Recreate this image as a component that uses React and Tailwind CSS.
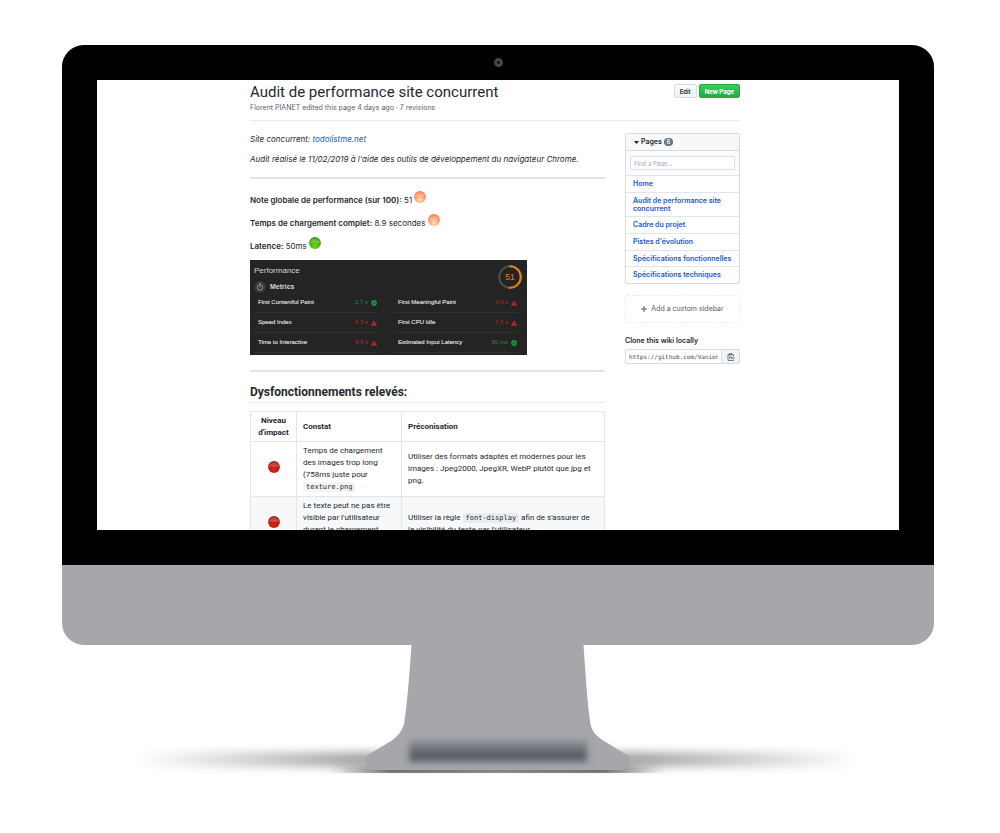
import React from "react";

const pages = [
  "Home",
  "Audit de performance site concurrent",
  "Cadre du projet",
  "Pistes d'évolution",
  "Spécifications fonctionnelles",
  "Spécifications techniques",
];

const metrics = [
  ["First Contentful Paint", "1.7 s", true],
  ["First Meaningful Paint", "4.0 s", false],
  ["Speed Index", "6.3 s", false],
  ["First CPU Idle", "7.6 s", false],
  ["Time to Interactive", "8.9 s", false],
  ["Estimated Input Latency", "50 ms", true],
];

const ballColors = {
  orange: ["#ffe3c9", "#fba06c", "#f07a42"],
  green: ["#6fd414", "#49b80c", "#2f8f08"],
  red: ["#dd2614", "#c41a0c", "#96100a"],
};

function Ball({ color }) {
  const [light, mid, dark] = ballColors[color];
  const id = "ball-" + color;
  return (
    <svg viewBox="0 0 24 24" className="inline-block size-3 align-baseline" aria-hidden="true">
      <defs>
        <radialGradient id={id} cx="0.5" cy="0.75" r="0.65">
          <stop offset="0" stopColor={light} />
          <stop offset="0.6" stopColor={mid} />
          <stop offset="1" stopColor={dark} />
        </radialGradient>
        <linearGradient id={id + "-shine"} x1="0" y1="0" x2="0" y2="1">
          <stop offset="0" stopColor="#fff" stopOpacity="0.15" />
          <stop offset="1" stopColor="#fff" stopOpacity="0.25" />
        </linearGradient>
      </defs>
      <circle cx="12" cy="12" r="11.8" fill={`url(#${id})`} />
      <path d="M2 11.500C2 5.500 6.500 1.500 12 1.500S22 5.500 22 11.500Z" fill={`url(#${id}-shine)`} />
    </svg>
  );
}

function Status({ ok }) {
  return ok ? (
    <svg viewBox="0 0 12 12" className="size-[6px]" aria-hidden="true">
      <circle cx="6" cy="6" r="5.8" fill="#1b8f3e" />
      <path d="M3.2 6.2 5.2 8.1 8.9 4.2" fill="none" stroke="#242424" strokeWidth="1.4" />
    </svg>
  ) : (
    <svg viewBox="0 0 12 12" className="size-[6px]" aria-hidden="true">
      <path d="M6 .8 12 11.2H0Z" fill="#d4262a" />
      <path d="M6 4.4V8M6 8.8V10" stroke="#242424" strokeWidth="1.2" />
    </svg>
  );
}

function PerformancePanel() {
  return (
    <section className="mb-[15px] h-[95px] w-[277px] overflow-hidden bg-[#242424] px-1 pt-[5px] font-['Liberation_Sans',sans-serif] text-[#d5d5d5]">
      <div className="flex justify-between">
        <div>
          <h3 className="text-[8px] leading-[12px]">Performance</h3>
          <div className="mt-1 flex items-center gap-1">
            <span className="flex size-3 items-center justify-center rounded-full bg-[#363636]">
              <svg viewBox="0 0 16 16" className="size-2" fill="none" stroke="#b5b5b5" strokeWidth="1.4" aria-hidden="true">
                <circle cx="8" cy="9" r="5.4" />
                <path d="M8 9V6M6 1.2h4M12 4.6l1.2-1.2" />
              </svg>
            </span>
            <h4 className="text-[7px] leading-[10px] font-bold">Metrics</h4>
          </div>
        </div>
        <svg viewBox="0 0 48 48" className="mr-px size-6" role="img" aria-label="Score 51">
          <circle cx="24" cy="24" r="21.500" fill="none" stroke="#505050" strokeWidth="4" />
          <path d="M24 2.500a21.500 21.500 0 1 1-1.4 42.950" fill="none" stroke="#ef7b0e" strokeWidth="4" strokeLinecap="round" />
          <text x="24" y="30" textAnchor="middle" fontSize="17" fill="#ef7b0e">51</text>
        </svg>
      </div>
      <dl className="grid grid-cols-2 gap-x-4 pr-[5px] text-[6px] leading-[7px]">
        {metrics.map(([name, value, ok]) => (
          <div key={name} className="flex h-5 items-center justify-between border-b border-[#303030] pr-px pl-1">
            <dt className="[-webkit-text-stroke:0.2px]">{name}</dt>
            <dd className={ok ? "flex items-center gap-[3px] text-[#1f8f42]" : "flex items-center gap-[3px] text-[#b82428]"}>
              {value}
              <Status ok={ok} />
            </dd>
          </div>
        ))}
      </dl>
    </section>
  );
}

function Code({ children }) {
  return (
    <code className="rounded-xs bg-[#1b1f23]/5 px-[3px] py-px font-['DejaVu_Sans_Mono',monospace] text-[7px] leading-none">
      {children}
    </code>
  );
}

function IssuesTable() {
  const cell = "border border-[#e3e6e9] px-[6px] py-[3px]";
  const head = "border border-[#e3e6e9] px-[6px] pt-[3px] pb-[2px] text-left font-bold";
  return (
    <table className="w-full table-fixed border-collapse font-['Roboto',sans-serif] text-[8px] leading-[12px]">
      <colgroup>
        <col className="w-[46px]" />
        <col className="w-[105px]" />
        <col />
      </colgroup>
      <thead>
        <tr>
          <th className="border border-[#e3e6e9] px-[3px] pt-[3px] pb-[2px] text-center font-bold">Niveau d'impact</th>
          <th className={head}>Constat</th>
          <th className={head}>Préconisation</th>
        </tr>
      </thead>
      <tbody>
        <tr>
          <td className={`${cell} text-center`}><Ball color="red" /></td>
          <td className={cell}>
            Temps de chargement des images trop long (758ms juste pour <Code>texture.png</Code>
          </td>
          <td className={cell}>
            Utiliser des formats adaptés et modernes pour les images : Jpeg2000, JpegXR, WebP plutôt que jpg et png.
          </td>
        </tr>
        <tr className="bg-[#f6f8fa]">
          <td className={`${cell} text-center`}><Ball color="red" /></td>
          <td className={cell}>
            Le texte peut ne pas être visible par l'utilisateur durant le chargement typographique
          </td>
          <td className="border border-[#e3e6e9] py-[3px] pr-3 pl-[6px]">
            Utiliser la règle <Code>font-display</Code> afin de s'assurer de la visibilité du texte par l'utilisateur.
          </td>
        </tr>
      </tbody>
    </table>
  );
}

function Article() {
  return (
    <article className="min-w-0 flex-1 text-[8px] leading-[12px]">
      <p className="mb-2 italic">
        Site concurrent: <a href="#todolistme" className="text-[#0366d6]">todolistme.net</a>
      </p>
      <p className="mb-3 italic">
        Audit réalisé le 11/02/2019 à l'aide des outils de développement du navigateur Chrome.
      </p>
      <hr className="mb-3 h-[2px] border-0 bg-[#e1e4e8]" />
      <p className="mb-2 h-[15px]">
        <strong className="font-semibold">Note globale de performance (sur 100):</strong> 51 <Ball color="orange" />
      </p>
      <p className="mb-2 h-[15px]">
        <strong className="font-semibold">Temps de chargement complet:</strong> 8.9 secondes <Ball color="orange" />
      </p>
      <p className="mb-2 h-[15px]">
        <strong className="font-semibold">Latence:</strong> 50ms <Ball color="green" />
      </p>
      <PerformancePanel />
      <hr className="mb-3 h-[2px] border-0 bg-[#e1e4e8]" />
      <h2 className="mb-2 border-b border-[#eaecef] pb-[2px] pt-px font-['Roboto',sans-serif] text-[12px] leading-[15px] font-bold">
        Dysfonctionnements relevés:
      </h2>
      <IssuesTable />
    </article>
  );
}

function Sidebar() {
  return (
    <aside className="w-[115px] shrink-0 text-[7px]">
      <nav aria-label="Pages" className="rounded-xs border border-[#d8dce0]">
        <div className="flex h-[17px] items-center gap-[2px] border-b border-[#d8dce0] bg-[#f6f8fa] px-2 font-semibold">
          <svg viewBox="0 0 10 6" className="h-[3px] w-[5px]" aria-hidden="true"><path d="M0 0h10L5 6Z" fill="#24292e" /></svg>
          <h3>Pages</h3>
          <span className="flex h-2 w-[9px] items-center justify-center rounded-full bg-[#6a737d] text-[6px] leading-none text-white">6</span>
        </div>
        <div className="bg-[#fafbfc] px-1 py-[5px]">
          <input
            type="text"
            aria-label="Find a Page"
            placeholder="Find a Page…"
            className="block h-[14px] w-full rounded-xs border border-[#dcdfe3] bg-white px-[3px] text-[6px] placeholder:text-[#a3a8ae]"
          />
        </div>
        <ul className="flex h-[108px] flex-col leading-[8px] font-semibold">
          {pages.map((page) => (
            <li key={page} className="flex flex-auto items-center border-t border-[#e1e4e8] px-[7px] py-[3px]">
              <a href="#page" className="text-[#1558cf]">{page}</a>
            </li>
          ))}
        </ul>
      </nav>
      <a href="#sidebar" className="mt-[11px] flex h-7 items-center justify-center gap-1 rounded-xs border border-dashed border-[#eceef0] text-[#586069]">
        <svg viewBox="0 0 12 12" className="size-[6px]" stroke="#444b52" strokeWidth="1.8" aria-hidden="true"><path d="M6 0v12M0 6h12" /></svg>
        Add a custom sidebar
      </a>
      <label htmlFor="clone" className="mt-3 block leading-[12px] font-semibold">Clone this wiki locally</label>
      <div className="mt-[2px] flex h-[15px]">
        <input
          id="clone"
          type="text"
          readOnly
          defaultValue="https://github.com/Vanion"
          className="min-w-0 flex-1 rounded-l-xs border border-[#d8dce0] px-[3px] font-['DejaVu_Sans_Mono',monospace] text-[6px] text-[#444b52]"
        />
        <button type="button" aria-label="Copy" className="flex w-[18px] items-center justify-center rounded-r-xs border border-l-0 border-[#d8dce0] bg-[#f1f3f5]">
          <svg viewBox="0 0 16 16" className="size-2" fill="none" stroke="#444b52" strokeWidth="1.4" aria-hidden="true">
            <path d="M13 7V3H2v12h11v-2M5 3V1.2h5V3M4 6h5M4 8.5h3M4 11.500h3M15.500 10H8.500M11 7.500 8.500 10 11 12.500" />
          </svg>
        </button>
      </div>
    </aside>
  );
}

function WikiPage() {
  return (
    <div className="mx-auto w-[496px] max-w-full pr-[6px] pt-[2px] text-[#24292e]">
      <header className="mb-3 border-b border-[#eaecef] pb-[7px]">
        <div className="flex items-start justify-between">
          <h1 className="font-['Roboto',sans-serif] text-[15px] leading-[20px]">Audit de performance site concurrent</h1>
          <div className="mt-[2px] flex gap-[2px] text-[6px]">
            <button type="button" className="h-[14px] rounded-xs border border-[#d8dbde] bg-linear-to-b from-[#fafbfc] to-[#eff3f6] px-[5px] font-semibold">Edit</button>
            <button type="button" className="h-[14px] rounded-xs border border-[#28a745] bg-linear-to-b from-[#34d058] to-[#28a745] px-[5px] font-bold text-white">New Page</button>
          </div>
        </div>
        <p className="text-[7px] leading-[11px] text-[#586069]">Florent PIANET edited this page 4 days ago · 7 revisions</p>
      </header>
      <div className="flex gap-5">
        <Article />
        <Sidebar />
      </div>
    </div>
  );
}

function Stand() {
  return (
    <svg viewBox="128 645 740 140" className="mx-auto block w-[740px] max-w-full" aria-hidden="true">
      <defs>
        <linearGradient id="floor">
          <stop offset="0" stopColor="#000" stopOpacity="0" />
          <stop offset="0.3" stopColor="#000" stopOpacity="0.34" />
          <stop offset="0.7" stopColor="#000" stopOpacity="0.34" />
          <stop offset="1" stopColor="#000" stopOpacity="0" />
        </linearGradient>
        <linearGradient id="contact">
          <stop offset="0" stopColor="#333" stopOpacity="0" />
          <stop offset="0.18" stopColor="#333" stopOpacity="0.85" />
          <stop offset="0.5" stopColor="#6a6a6d" />
          <stop offset="0.82" stopColor="#333" stopOpacity="0.85" />
          <stop offset="1" stopColor="#333" stopOpacity="0" />
        </linearGradient>
        <linearGradient id="recess" x1="0" y1="0" x2="0" y2="1">
          <stop offset="0" stopColor="#5d6069" stopOpacity="0" />
          <stop offset="0.65" stopColor="#5d6069" />
          <stop offset="1" stopColor="#5d6069" />
        </linearGradient>
        <filter id="soft" x="-10%" y="-100%" width="120%" height="300%"><feGaussianBlur stdDeviation="3 4.500" /></filter>
        <filter id="edge" x="-10%" y="-100%" width="120%" height="300%"><feGaussianBlur stdDeviation="3 3" /></filter>
        <clipPath id="ground"><rect x="128" y="700" width="740" height="73" /></clipPath>
      </defs>
      <rect x="138" y="752" width="720" height="15" fill="url(#floor)" filter="url(#soft)" />
      <g clipPath="url(#ground)">
        <rect x="330" y="767" width="334" height="8" fill="url(#contact)" filter="url(#edge)" />
      </g>
      <path
        d="M411.500 645H583.500C586 680 588 712 591 726C593 733 598 737 604 741L627 755Q630 757 630 759V763Q629 770 621 770H374Q366 770 365 763V759Q365 757 368 755L391 741C397 737 402 731 404 724C407 706 409 680 411.500 645Z"
        fill="#a6a7ab"
      />
      <rect x="409" y="737" width="178" height="25" fill="url(#recess)" filter="url(#edge)" />
    </svg>
  );
}

export default function App() {
  return (
    <main className="min-h-screen bg-white pt-[45px] pr-[66px] pl-[62px] font-['Inter','Noto_Sans',sans-serif]">
      <div className="overflow-hidden rounded-[22px] bg-[#a6a7ab]">
        <div className="bg-black px-[35px] pb-[35px]">
          <div className="flex h-[35px] items-center justify-center">
            <span className="size-[9px] rounded-full border-[3px] border-[#45454b] bg-[#111]" />
          </div>
          <div className="h-[450px] overflow-hidden bg-white">
            <WikiPage />
          </div>
        </div>
        <div className="h-20" />
      </div>
      <Stand />
    </main>
  );
}
